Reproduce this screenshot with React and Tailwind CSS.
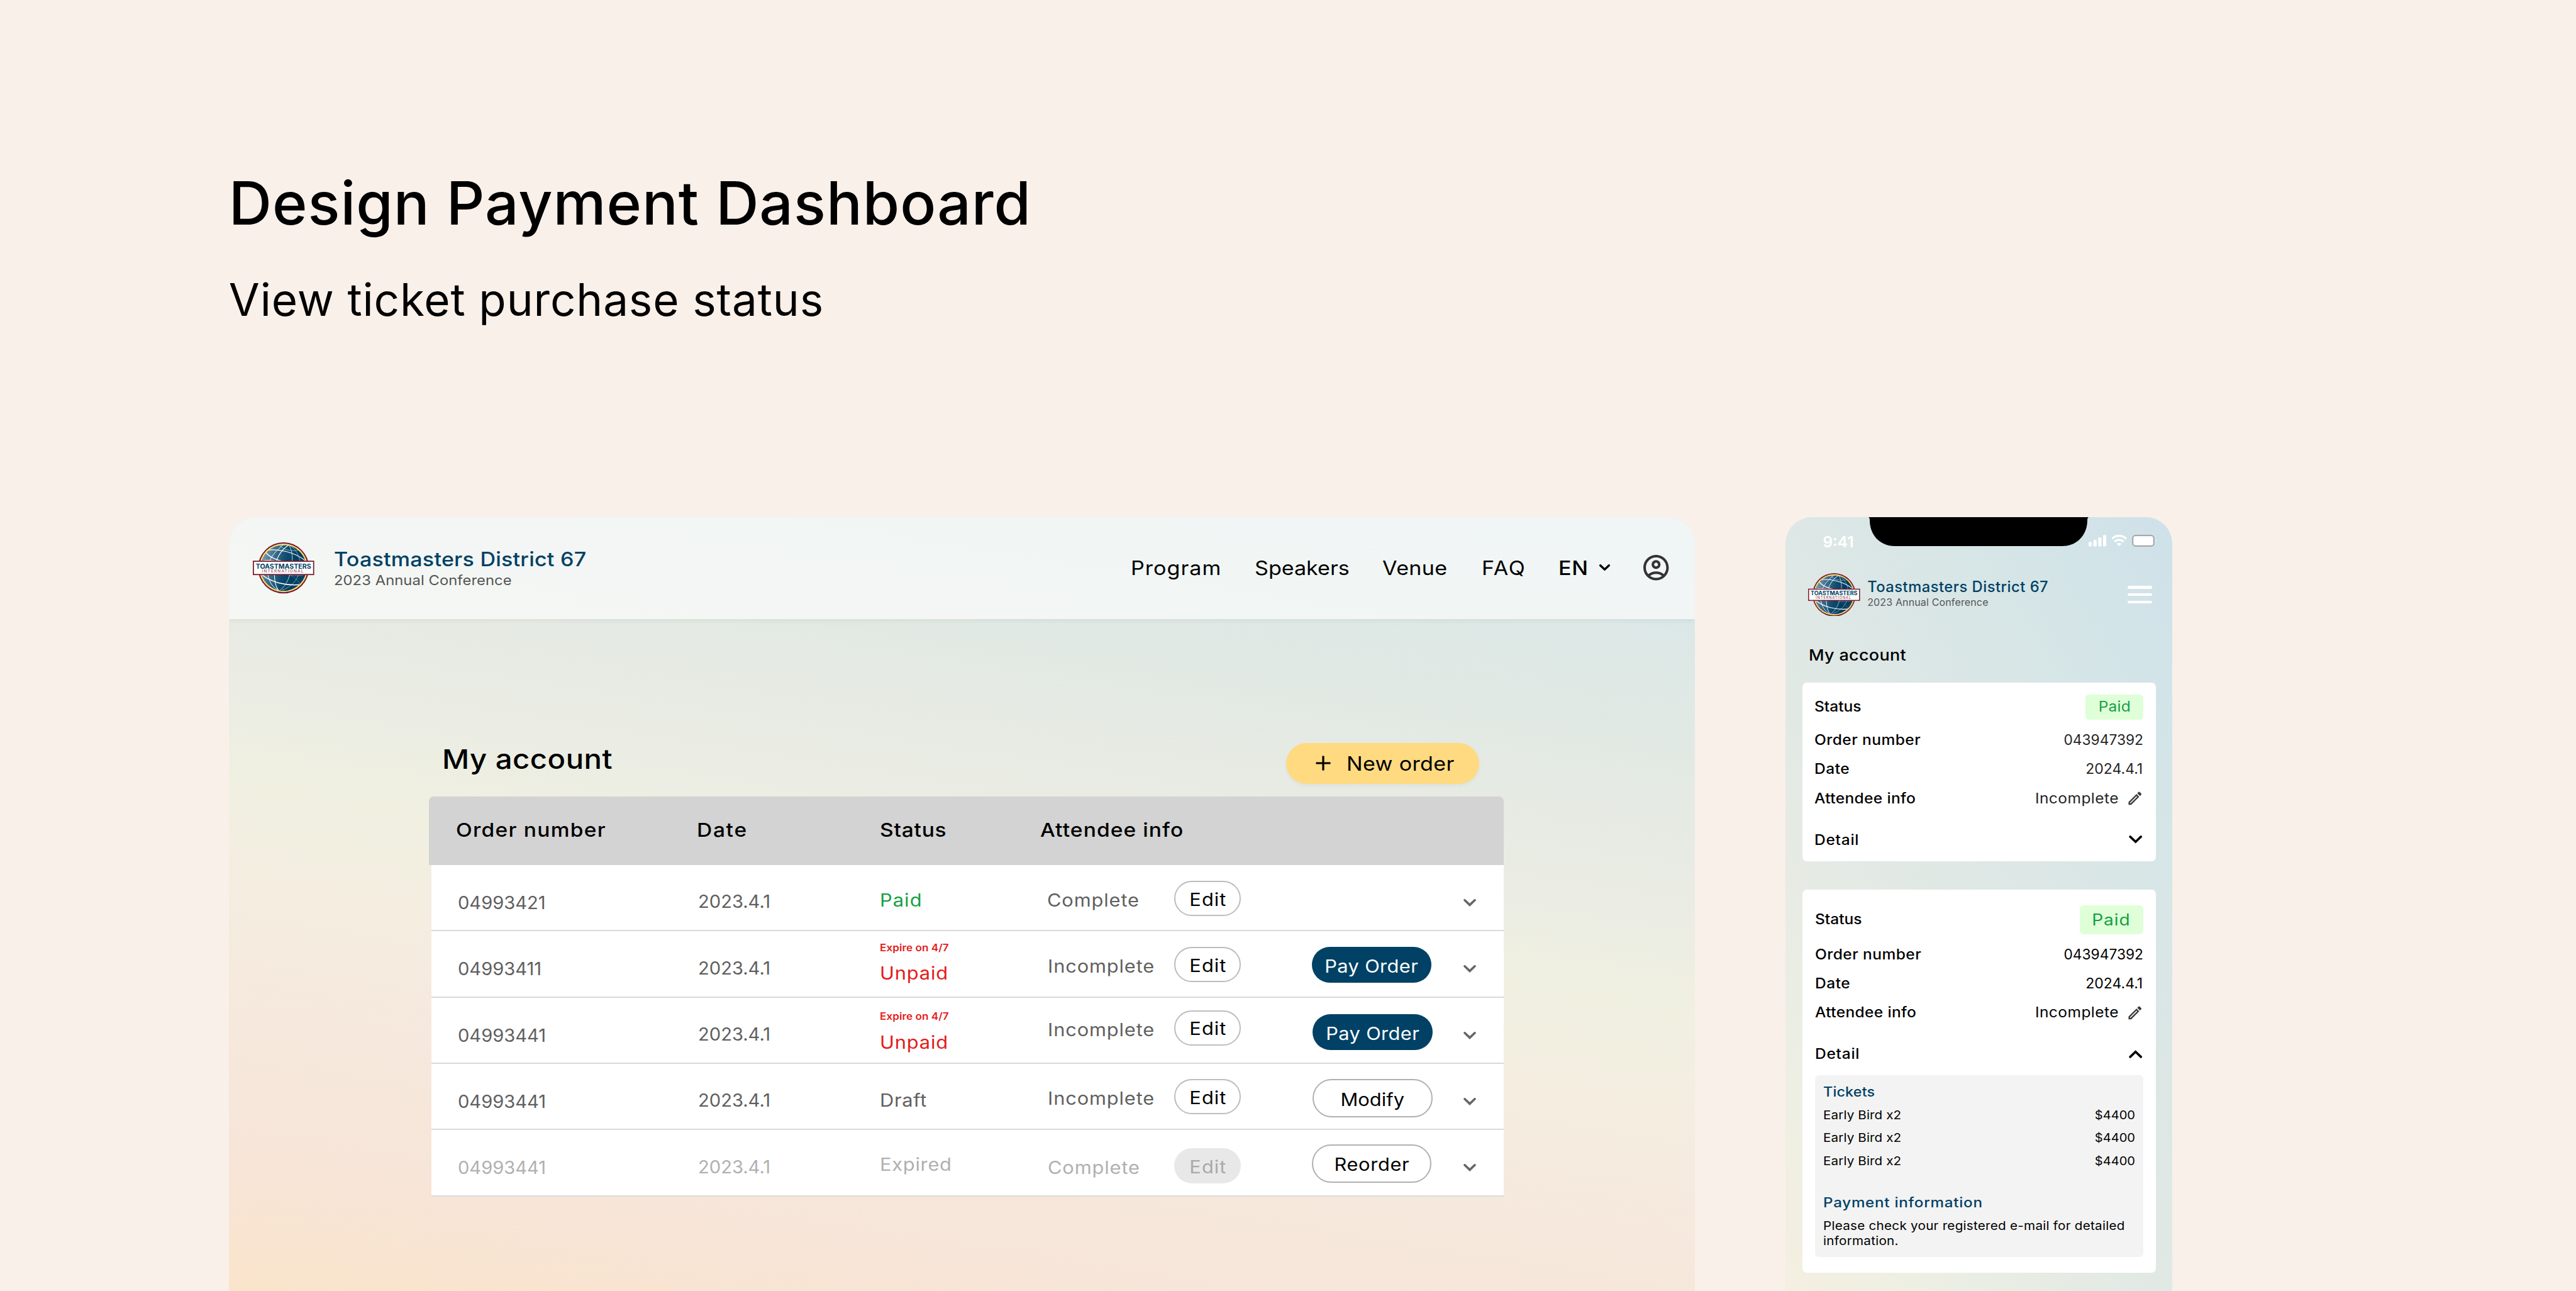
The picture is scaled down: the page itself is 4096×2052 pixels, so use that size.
import React from 'react';
import { MdOutlineAccountCircle, MdOutlineModeEdit } from 'react-icons/md';

function Logo({ id, className }) {
  return (
    <svg viewBox="0 0 132 110" className={className} aria-label="Toastmasters International">
      <defs>
        <linearGradient id={id + '-globe'} x1="0" y1="0.35" x2="1" y2="0.6">
          <stop offset="0" stopColor="#7d9db1" />
          <stop offset="0.25" stopColor="#3f6f8d" />
          <stop offset="0.5" stopColor="#0f4c70" />
          <stop offset="0.75" stopColor="#003c60" />
          <stop offset="1" stopColor="#0b4568" />
        </linearGradient>
        <clipPath id={id + '-clip'}>
          <circle cx="66" cy="55" r="49.5" />
        </clipPath>
      </defs>
      <circle cx="66" cy="55" r="55" fill="#7a1c30" />
      <circle cx="66" cy="55" r="52.2" fill="#fbe36f" />
      <circle cx="66" cy="55" r="49.5" fill={`url(#${id}-globe)`} />
      <g clipPath={`url(#${id}-clip)`}>
        <g transform="translate(-24 -26) scale(0.33333)" fill="none" stroke="#fff" strokeLinecap="round">
          <path d="M160 131C230 116 340 140 410 196" strokeWidth="5" />
          <path d="M155 140C172 170 225 195 290 207" strokeWidth="6" />
          <path d="M133 199C165 190 205 194 250 207" strokeWidth="5" />
          <path d="M268 94C205 145 165 200 167 262C170 330 200 372 245 392" strokeWidth="4" />
          <path d="M305 95C243 130 213 205 211 270C210 330 222 370 240 391" strokeWidth="4.5" />
          <path d="M305 95C336 140 333 230 303 310C287 352 262 377 243 391" strokeWidth="3" />
          <path d="M305 95C360 125 387 190 375 260C363 322 318 368 262 386" strokeWidth="2.5" opacity="0.8" />
          <path d="M243 93C258 122 305 140 375 128" strokeWidth="2.5" opacity="0.8" />
          <path d="M225 100C250 92 290 92 325 100" strokeWidth="4" />
          <path d="M128 284C185 335 290 362 388 350" strokeWidth="6" />
          <path d="M245 275C300 292 360 300 412 286" strokeWidth="2.5" opacity="0.6" />
          <path d="M270 270C325 290 365 320 378 350" strokeWidth="2" opacity="0.5" />
        </g>
      </g>
      <rect x="1.2" y="40.7" width="129.6" height="28.6" fill="#fff" stroke="#7a1c30" strokeWidth="2.4" />
      <text x="6.3" y="56.3" fontFamily="Inter, sans-serif" fontWeight="700" fontSize="14.2" textLength="119" lengthAdjust="spacingAndGlyphs" fill="#004165">
        TOASTMASTERS
      </text>
      <text x="19.7" y="64.8" fontFamily="Inter, sans-serif" fontWeight="400" fontSize="8.8" textLength="89" fill="#8a2b40">
        INTERNATIONAL
      </text>
    </svg>
  );
}

function Chevron({ className, up = false, stroke = 3.6 }) {
  return (
    <svg viewBox="0 0 20 12" className={className} fill="none" stroke="currentColor" strokeWidth={stroke} strokeLinecap="round" strokeLinejoin="miter">
      <path d={up ? 'M2 10.2L10 2.6L18 10.2' : 'M2 1.8L10 9.4L18 1.8'} />
    </svg>
  );
}

const rows = [
  {
    number: '04993421', tone: 'text-[#5f5f5f]',
    status: 'Paid', statusClass: 'pt-[41.4px] tracking-[0.035em] text-[#14a044]',
    attendee: 'Complete', attendeeClass: 'pt-[41.4px]',
    editClass: 'mt-[25px] border-2 border-[#bdbdbd] bg-white text-black',
  },
  {
    number: '04993411', tone: 'text-[#5f5f5f]',
    note: 'Expire on 4/7', status: 'Unpaid', statusClass: 'pt-[18.1px] tracking-[0.028em] text-[#e51a1a]',
    attendee: 'Incomplete', attendeeClass: 'pt-[41.6px] ml-[1.3px]',
    editClass: 'mt-[24.6px] border-2 border-[#bdbdbd] bg-white text-black',
    action: 'Pay Order', actionClass: 'mt-[24.1px] h-[57px] pt-[5px] bg-[#004165] text-white tracking-[0.012em]',
  },
  {
    number: '04993441', tone: 'text-[#5f5f5f]',
    note: 'Expire on 4/7', status: 'Unpaid', statusClass: 'pt-[22.6px] tracking-[0.028em] text-[#e51a1a]',
    attendee: 'Incomplete', attendeeClass: 'pt-[36.8px] ml-[1.3px]',
    editClass: 'mt-[19.9px] border-2 border-[#bdbdbd] bg-white text-black',
    action: 'Pay Order', actionClass: 'mt-[26.2px] ml-[1.7px] h-[57px] pt-[5px] bg-[#004165] text-white tracking-[0.012em]',
  },
  {
    number: '04993441', tone: 'text-[#5f5f5f]',
    status: 'Draft', statusClass: 'pt-[44.4px] tracking-[0.022em]',
    attendee: 'Incomplete', attendeeClass: 'pt-[41.4px] ml-[1.3px]',
    editClass: 'mt-[24.4px] border-2 border-[#bdbdbd] bg-white text-black',
    action: 'Modify', actionClass: 'mt-[24.4px] ml-[1.7px] h-[61px] pt-1 border-2 border-[#b0b0b0] bg-white text-black tracking-[0.002em]',
  },
  {
    number: '04993441', tone: 'text-[#b0b0b0]',
    status: 'Expired', statusClass: 'pt-[41px] tracking-[0.024em]',
    attendee: 'Complete', attendeeClass: 'pt-[45.9px] ml-[1.7px]',
    editClass: 'mt-[29px] bg-[#e8e8e8] text-[#a9a9a9]',
    action: 'Reorder', actionClass: 'mt-[22.6px] h-[61px] pt-1 border-2 border-[#b0b0b0] bg-white text-black tracking-[0.02em]',
  },
];

function OrderRow({ row }) {
  return (
    <div className={`grid h-[105.3px] shrink-0 grid-cols-[382.2px_289px_265.8px_202.5px_218.4px_241.1px_auto] items-start border-b-2 border-[#dadada] bg-white pl-[42px] text-[28px] leading-none ${row.tone}`}>
      <span className="origin-left scale-x-[1.04] pt-[46px]">{row.number}</span>
      <span className="origin-left scale-x-[1.04] pt-[44.2px]">2023.4.1</span>
      <div className={`flex origin-left scale-x-[1.1] flex-col ${row.statusClass}`}>
        {row.note && <span className="mb-[19.3px] text-[15.5px] leading-none font-semibold tracking-[0.005em]">{row.note}</span>}
        <span>{row.status}</span>
      </div>
      <span className={`origin-left scale-x-[1.1] tracking-[0.028em] ${row.attendeeClass}`}>{row.attendee}</span>
      <button className={`flex h-14 w-[106px] items-center justify-center rounded-full pt-[3px] pl-px leading-none tracking-[0.035em] ${row.editClass}`}>
        <span className="scale-x-[1.1]">Edit</span>
      </button>
      {row.action ? (
        <button className={`flex w-[190.7px] items-center justify-center rounded-full leading-none ${row.actionClass}`}>
          <span className="scale-x-[1.1]">{row.action}</span>
        </button>
      ) : (
        <span />
      )}
      <Chevron className="mt-[53.8px] h-3 w-5 text-[#666]" />
    </div>
  );
}

function DesktopCard() {
  return (
    <section className="flex h-[1230px] w-[2331px] shrink-0 flex-col overflow-hidden rounded-t-[42px] bg-[linear-gradient(189deg,#d9e6e8_0%,#dce8e7_11%,#e2e9e3_24%,#e8ebe4_34%,#ecede3_42%,#f0f0e1_49%,#f4ede0_60%,#f6e8dc_73%,#f7e5d9_85%,#fae4cb_100%)]">
      <header className="flex h-[161.7px] shrink-0 items-center bg-white/60 pr-[37px] pl-[38.2px] shadow-[0_3px_8px_rgba(0,0,0,0.05)]">
        <Logo id="desk" className="h-[81.3px] w-[97.6px]" />
        <div className="ml-[31.5px] flex flex-col gap-[6.3px] whitespace-nowrap">
          <span className="origin-left scale-x-[1.08] text-[31.5px] leading-none font-[550] tracking-[0.007em] text-[#004165]">Toastmasters District 67</span>
          <span className="origin-left scale-x-[1.08] text-[22px] leading-none tracking-[0.003em] text-[#555]">2023 Annual Conference</span>
        </div>
        <nav className="mb-[2px] ml-auto flex items-center text-[31px] leading-none text-black">
          <a className="w-[197.2px] origin-left scale-x-[1.1] tracking-[0.03em]">Program</a>
          <a className="w-[202.7px] origin-left scale-x-[1.1] tracking-[0em]">Speakers</a>
          <a className="w-[158px] origin-left scale-x-[1.1] tracking-[0.01em]">Venue</a>
          <a className="w-[122.5px] origin-left scale-x-[1.1] tracking-[0.05em]">FAQ</a>
          <a className="w-[64.8px] origin-left scale-x-[1.1] font-[550] tracking-[0.02em]">EN</a>
          <Chevron className="h-[10.5px] w-[17px]" stroke={4} />
          <MdOutlineAccountCircle className="ml-[49.2px] size-[48.5px] text-[#333]" />
        </nav>
      </header>
      <div className="flex flex-col pt-[197.6px]">
        <div className="flex h-[64.2px] items-start justify-between pr-[342.4px] pl-[339.4px]">
          <h2 className="origin-left scale-x-[1.1] pt-[3.4px] text-[43px] leading-none font-[550] tracking-[0.01em] text-black">My account</h2>
          <button className="flex h-[64.2px] w-[307px] items-center rounded-full bg-[#ffda80] pb-px pl-[47px] text-[31px] leading-none tracking-[0.009em] text-black shadow-[0_3px_6px_rgba(0,0,0,0.04)]">
            <svg viewBox="0 0 24 24" className="mr-[25px] size-6" stroke="currentColor" strokeWidth="3.2">
              <path d="M12 0.5V23.5M0.5 12H23.5" />
            </svg>
            <span className="origin-left scale-x-[1.1]">New order</span>
          </button>
        </div>
        <div className="mt-5 ml-[318.6px] flex w-[1708.8px] flex-col">
          <div className="grid h-[109.5px] shrink-0 grid-cols-[383.2px_290.7px_255px_auto] items-center rounded-t-lg bg-[#d3d3d3] pb-[2px] pl-[42.6px] text-[30.5px] leading-none font-[550] text-black">
            <span className="origin-left scale-x-[1.1] tracking-[0.037em]">Order number</span>
            <span className="origin-left scale-x-[1.1] tracking-[0.05em]">Date</span>
            <span className="origin-left scale-x-[1.1] tracking-[0.022em]">Status</span>
            <span className="origin-left scale-x-[1.1] tracking-[0.032em]">Attendee info</span>
          </div>
          <div className="ml-[3.4px] flex flex-col">
            {rows.map((row, i) => (
              <OrderRow key={i} row={row} />
            ))}
          </div>
        </div>
      </div>
    </section>
  );
}

function Field({ label, labelClass, children }) {
  return (
    <div className="flex h-[46.3px] shrink-0 items-center justify-between">
      <span className={`origin-left scale-x-[1.1] font-[550] ${labelClass}`}>{label}</span>
      {children}
    </div>
  );
}

function OrderFields({ valueTone }) {
  return (
    <>
      <Field label="Order number" labelClass="tracking-[0.018em]">
        <span className={`origin-right scale-x-[1.02] ${valueTone}`}>043947392</span>
      </Field>
      <Field label="Date" labelClass="tracking-[0.022em]">
        <span className={`origin-right scale-x-[1.03] pr-px ${valueTone}`}>2024.4.1</span>
      </Field>
      <Field label="Attendee info" labelClass="tracking-[0.014em]">
        <span className="flex items-center gap-3">
          <span className={`origin-right scale-x-[1.1] tracking-[0.018em] ${valueTone}`}>Incomplete</span>
          <MdOutlineModeEdit className="size-[27.6px] text-[#3a3a3a]" />
        </span>
      </Field>
    </>
  );
}

function PhoneCard() {
  return (
    <section className="flex h-[1230px] w-[615px] shrink-0 flex-col overflow-hidden rounded-t-[42px] bg-[linear-gradient(238deg,#cfe1e9_0%,#d2e4e8_12%,#d8e6e6_30%,#dfe8e5_50%,#e5eae4_66%,#edefe3_84%,#f4efe1_100%)]">
      <div className="flex h-[46px] shrink-0 items-start text-white">
        <span className="w-[132px] pt-[27.2px] pl-[59px] text-[24.4px] leading-none font-semibold">9:41</span>
        <svg viewBox="0 0 350 46" className="h-[46px] w-[350px] shrink-0">
          <path d="M0 0H350Q348 1 348 5C348 28 332 46 308 46H42C18 46 2 28 2 5Q2 1 0 0Z" fill="#000" />
        </svg>
        <div className="flex items-center gap-2 pt-[28px]">
          <svg viewBox="0 0 28 18.5" className="h-[18.5px] w-7 shrink-0" fill="currentColor">
            <rect x="0" y="11.6" width="5" height="6.9" rx="1.4" />
            <rect x="7.7" y="8" width="5" height="10.5" rx="1.4" />
            <rect x="15.4" y="4.2" width="5" height="14.3" rx="1.4" />
            <rect x="23" y="0.5" width="5" height="18" rx="1.4" />
          </svg>
          <svg viewBox="0 0 25 18.5" className="h-[18.5px] w-[25px] shrink-0" fill="none" stroke="currentColor" strokeWidth="3.2">
            <path d="M1.2 6.3A16 16 0 0 1 23.8 6.3" />
            <path d="M5.4 11A10 10 0 0 1 19.6 11" />
            <path d="M12.5 18.3L8.8 14.4A5.4 5.4 0 0 1 16.2 14.4Z" fill="currentColor" stroke="none" />
          </svg>
          <svg viewBox="0 0 40 19" className="h-[19px] w-10 shrink-0">
            <rect x="1" y="1" width="34" height="17" rx="4.5" fill="none" stroke="#aaa6a6" strokeWidth="1.8" />
            <rect x="2.8" y="2.6" width="30.4" height="13.8" rx="3" fill="#fff" />
            <path d="M37.3 6.2Q39 7.2 39 9.5Q39 11.8 37.3 12.8Z" fill="#fff" opacity="0.4" />
          </svg>
        </div>
      </div>
      <div className="mt-[42.5px] flex h-[68.8px] shrink-0 items-start pr-[32.7px] pl-[35.7px]">
        <Logo id="phone" className="h-[68.8px] w-[82.6px]" />
        <div className="ml-[11.5px] flex flex-col gap-[3.8px] pt-[10.5px] whitespace-nowrap">
          <span className="text-[23.7px] leading-none font-medium tracking-[0.022em] text-[#004165]">Toastmasters District 67</span>
          <span className="text-[16px] leading-none tracking-[0.009em] text-[#555]">2023 Annual Conference</span>
        </div>
        <div className="mt-[20.7px] ml-auto flex w-[39px] flex-col gap-[7.2px]">
          <span className="h-[4.4px] rounded-full bg-white" />
          <span className="h-[4.4px] rounded-full bg-white" />
          <span className="h-[4.4px] rounded-full bg-white" />
        </div>
      </div>
      <h3 className="mt-[50px] ml-[36.4px] shrink-0 origin-left scale-x-[1.1] text-[24.5px] leading-none font-[550] tracking-[0.012em] text-black">My account</h3>
      <div className="mt-[30.8px] flex flex-col gap-[45.9px] px-[26.2px] text-[22.3px] leading-none text-black">
        <article className="flex h-[283.8px] shrink-0 flex-col rounded-[7px] bg-white pt-[19.7px] pr-5 pl-[19.4px]">
          <div className="mb-[8.7px] flex h-10 items-center justify-between">
            <span className="origin-left scale-x-[1.1] pb-[2px] font-[550]">Status</span>
            <span className="flex h-10 w-[92.5px] items-center justify-center rounded-[6px] bg-[#dfffd8] pb-[2px] text-[#14a044]">
              <span className="scale-x-[1.1] tracking-[0.01em]">Paid</span>
            </span>
          </div>
          <OrderFields valueTone="text-[#242424]" />
          <div className="mt-[19.7px]">
            <Field label="Detail" labelClass="tracking-[0.03em]">
              <Chevron className="mr-[2px] h-[12.8px] w-[21.4px]" stroke={3.4} />
            </Field>
          </div>
        </article>
        <article className="flex h-[608.9px] shrink-0 flex-col rounded-[7px] bg-white pt-[24.4px] pr-5 pl-5">
          <div className="mb-[9.2px] flex h-[45.8px] shrink-0 items-center justify-between">
            <span className="origin-left scale-x-[1.1] pb-[2px] font-[550]">Status</span>
            <span className="flex h-[45.8px] w-[101.6px] items-center justify-center rounded-[6px] bg-[#dfffd8] pt-[1px] text-[25.5px] text-[#14a044]">
              <span className="scale-x-[1.1] tracking-[0.035em]">Paid</span>
            </span>
          </div>
          <OrderFields valueTone="text-black" />
          <div className="mt-[19.3px]">
            <Field label="Detail" labelClass="tracking-[0.03em]">
              <Chevron up className="mr-[2px] h-[12.8px] w-[21.4px]" stroke={3.4} />
            </Field>
          </div>
          <div className="mt-[11.2px] flex h-[289px] shrink-0 flex-col rounded-[6px] bg-[#f3f3f3] pt-[10.2px] pr-[13.6px] pl-[13px] text-[18.8px]">
            <h4 className="origin-left scale-x-[1.06] text-[22px] leading-[30px] font-[550] tracking-[0.008em] text-[#004165]">Tickets</h4>
            <ul className="mt-[5px]">
              {[0, 1, 2].map((n) => (
                <li key={n} className="flex h-[36.7px] items-center justify-between">
                  <span className="origin-left scale-x-[1.1] tracking-[0.005em]">Early Bird x2</span>
                  <span className="origin-right scale-x-[1.07]">$4400</span>
                </li>
              ))}
            </ul>
            <h4 className="mt-[31.5px] origin-left scale-x-[1.1] text-[22px] leading-[30px] font-[550] tracking-[0.03em] text-[#004165]">Payment information</h4>
            <p className="mt-[10.7px] origin-left scale-x-[1.1] leading-6 tracking-[0.012em] whitespace-nowrap">
              Please check your registered e-mail for detailed
              <br />
              information.
            </p>
          </div>
        </article>
      </div>
    </section>
  );
}

export default function App() {
  return (
    <main className="flex h-[2052px] w-[4096px] flex-col overflow-hidden bg-[#f9f0ea] pt-[276.2px] pl-[363.8px] font-['Inter',sans-serif]">
      <h1 className="shrink-0 text-[94.6px] leading-none font-medium tracking-[0.01em] text-black">Design Payment Dashboard</h1>
      <p className="mt-[70.7px] shrink-0 text-[71px] leading-none tracking-[0.012em] text-black">View ticket purchase status</p>
      <div className="mt-[309.7px] flex items-start gap-[144.6px]">
        <DesktopCard />
        <PhoneCard />
      </div>
    </main>
  );
}
